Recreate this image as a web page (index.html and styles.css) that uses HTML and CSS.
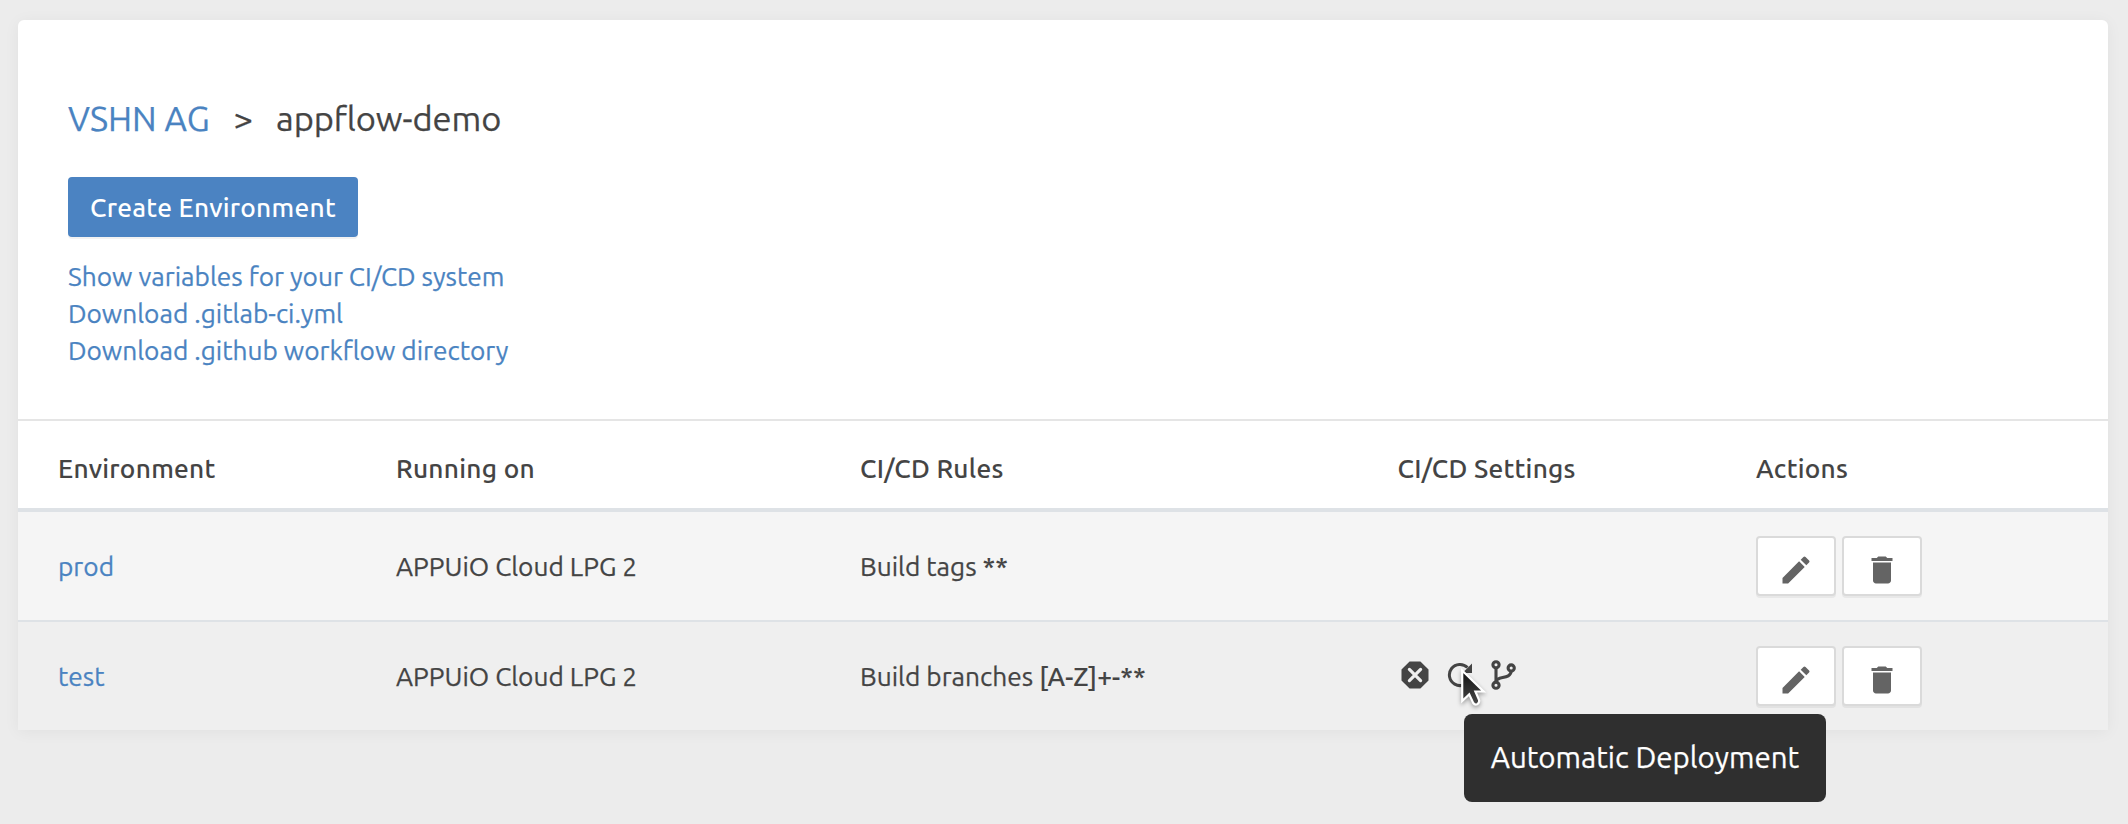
FILE: index.html
```html
<!DOCTYPE html>
<html lang="en">
<head>
<meta charset="utf-8">
<title>appflow-demo</title>
<link rel="stylesheet" href="styles.css">
</head>
<body>
<svg class="defs" aria-hidden="true">
  <symbol id="pencil" viewBox="0 0 24 24"><path d="M3 17.25V21h3.75L17.81 9.94l-3.75-3.75L3 17.25zM20.71 7.04a1 1 0 0 0 0-1.41l-2.34-2.34a1 1 0 0 0-1.41 0l-1.83 1.83 3.75 3.75 1.83-1.83z"/></symbol>
  <symbol id="trash" viewBox="0 0 24 24"><path d="M6 19c0 1.1.9 2 2 2h8c1.1 0 2-.9 2-2V7H6v12zM19 4h-3.5l-1-1h-5l-1 1H5v2h14V4z"/></symbol>
</svg>
<main class="card">
  <header class="intro">
    <h1 class="crumbs"><a class="link" href="#">VSHN AG</a><span class="sep">&gt;</span><span class="current">appflow-demo</span></h1>
    <button class="primary" type="button">Create Environment</button>
    <nav class="links">
      <a class="link" href="#">Show variables for your CI/CD system</a>
      <a class="link" href="#">Download .gitlab-ci.yml</a>
      <a class="link" href="#">Download .github workflow directory</a>
    </nav>
  </header>
  <section class="table">
    <div class="row head">
      <span>Environment</span><span>Running on</span><span>CI/CD Rules</span><span>CI/CD Settings</span><span>Actions</span>
    </div>
    <div class="row">
      <a class="link" href="#">prod</a><span>APPUiO Cloud LPG 2</span>
      <span>Build tags <b>**</b></span><span></span>
      <div class="actions">
        <button class="tool" type="button" aria-label="Edit"><svg><use href="#pencil"/></svg></button>
        <button class="tool" type="button" aria-label="Delete"><svg><use href="#trash"/></svg></button>
      </div>
    </div>
    <div class="row hover">
      <a class="link" href="#">test</a><span>APPUiO Cloud LPG 2</span>
      <span>Build branches <b>[A-Z]+-**</b></span>
      <div class="settings">
        <svg class="stop" viewBox="0 0 28 28"><path fill="#444" d="M8.600.500h10.800l8.100 8.100v10.800l-8.100 8.100H8.600L.500 19.400V8.600z"/><path d="M8.400 8.400l11.200 11.200M19.600 8.400L8.400 19.600" stroke="#efefef" stroke-width="3.200" fill="none" stroke-linecap="round"/></svg>
        <span class="refresh">
          <svg viewBox="0 0 26 26"><path d="M20.500 5.500A10.600 10.600 0 1 0 22.800 17" fill="none" stroke="#444" stroke-width="3"/><path d="M25 1.500V11H15.500z" fill="#444"/></svg>
          <svg class="cursor" viewBox="0 0 32 44"><defs><linearGradient id="ink" x1="0" y1="0" x2="0" y2="1"><stop offset="0" stop-color="#111"/><stop offset="1" stop-color="#484848"/></linearGradient></defs><path d="M4.200 4.500V35l7-6.600 4 8.600q1.700 2.300 4 1.200t2-4L17.400 25.500h8.200z" fill="url(#ink)" stroke="#fff" stroke-width="2.200"/></svg>
          <span class="tooltip" role="tooltip">Automatic Deployment</span>
        </span>
        <svg class="branch" viewBox="0 0 26 30"><g fill="none" stroke="#444" stroke-width="3.100"><circle cx="5" cy="4.800" r="3.100"/><circle cx="5" cy="25.200" r="3.100"/><circle cx="20.200" cy="8" r="3.100"/><path d="M5 7.900v14.200M5.300 21.500C6 15.500 19.500 20 20.200 11"/></g></svg>
      </div>
      <div class="actions">
        <button class="tool" type="button" aria-label="Edit"><svg><use href="#pencil"/></svg></button>
        <button class="tool" type="button" aria-label="Delete"><svg><use href="#trash"/></svg></button>
      </div>
    </div>
  </section>
</main>
</body>
</html>
```
FILE: styles.css
```css
* { box-sizing: border-box; }
body {
  margin: 0;
  padding: 20px 20px 0 18px;
  height: 824px;
  overflow: hidden;
  background: #ececec;
  color: #444;
  font: 26.25px/37px Ubuntu, "Noto Sans", sans-serif;
  -webkit-text-stroke: .25px;
}
.defs { display: none; }
.link { color: #4a83c1; text-decoration: none; }
.card {
  height: 710px;
  background: #fff;
  border-radius: 6px 6px 0 0;
  box-shadow: 0 2px 16px rgba(0, 0, 0, .05);
}
.intro {
  display: flex;
  flex-direction: column;
  align-items: flex-start;
  height: 401px;
  padding: 74px 50px 0;
  border-bottom: 2px solid #e5e5e5;
}
.crumbs { display: flex; margin: 0 0 33px; font-size: 34.5px; line-height: 50px; font-weight: 400; }
.sep { margin: 0 23px 0 24px; }
.current { letter-spacing: -.1px; }
.primary {
  width: 290px;
  height: 60px;
  padding: 0;
  border: 0;
  border-radius: 4px;
  background: #4b83c2;
  box-shadow: 0 2px 0 rgba(0, 0, 0, .05);
  color: #fff;
  font: inherit;
  font-weight: 500;
  letter-spacing: .27px;
  -webkit-text-stroke: 0;
}
.links { display: flex; flex-direction: column; margin-top: 21px; }
.row {
  display: grid;
  grid-template-columns: 338px 464px 537.5px 358.5px 1fr;
  align-items: center;
  height: 108px;
  padding-left: 40px;
  background: #f5f5f5;
}
.head {
  height: 91px;
  padding-top: 8px;
  border-bottom: 4px solid #dee2e6;
  background: #fff;
  font-weight: 500;
  letter-spacing: .29px;
  -webkit-text-stroke: .1px;
}
.hover { height: 110px; border-top: 2px solid #dee2e6; background: #efefef; }
b { font-weight: 500; letter-spacing: .1px; -webkit-text-stroke: .1px; }
.actions { display: flex; gap: 6px; }
.tool {
  display: flex;
  width: 80px;
  height: 60px;
  padding: 13.5px 0 0 20px;
  border: 2px solid #dadada;
  border-radius: 4px;
  background: #fff;
  box-shadow: 0 2px 0 rgba(0, 0, 0, .05);
}
.tool svg { width: 36px; height: 36px; fill: #646464; }
.settings { display: flex; align-items: center; padding: 0 0 2px 3.5px; }
.stop { width: 28px; height: 28px; }
.refresh { position: relative; width: 26px; height: 26px; margin: 0 18px; }
.refresh svg { display: block; width: 26px; height: 26px; }
.branch { width: 26px; height: 30px; }
.refresh .cursor {
  position: absolute;
  left: 11px;
  top: 4px;
  width: 32px;
  height: 44px;
  z-index: 2;
  filter: drop-shadow(0 2px 2px rgba(0, 0, 0, .35));
}
.tooltip {
  position: absolute;
  left: 17px;
  top: 52px;
  z-index: 1;
  width: 362px;
  height: 88px;
  border-radius: 8px;
  background: #2f2f2f;
  color: #fff;
  font-size: 29.5px;
  line-height: 88px;
  text-align: center;
  white-space: nowrap;
}
```
